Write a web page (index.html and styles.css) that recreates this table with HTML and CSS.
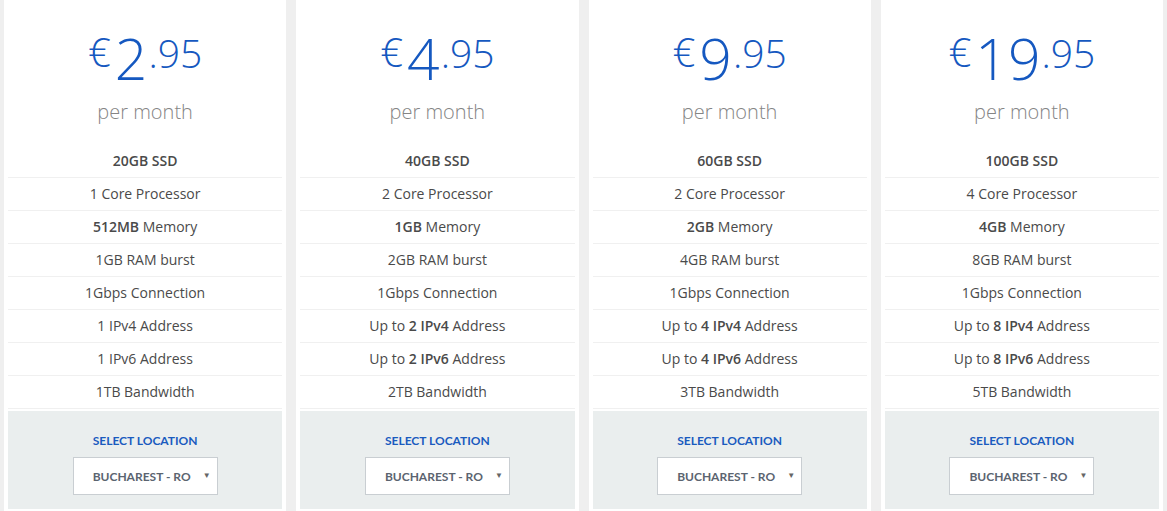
FILE: index.html
```html
<!DOCTYPE html>
<html>
<head>
<meta charset="utf-8">
<link rel="stylesheet" href="styles.css">
</head>
<body>
<div class="plans">
  <div class="card">
    <div class="price-block">
      <div class="price"><span class="cur">€</span><span class="int">2</span><span class="dec">.95</span></div>
      <div class="period">per month</div>
    </div>
    <ul class="features">
      <li><b>20GB SSD</b></li>
      <li>1 Core Processor</li>
      <li><b>512MB</b> Memory</li>
      <li>1GB RAM burst</li>
      <li>1Gbps Connection</li>
      <li>1 IPv4 Address</li>
      <li>1 IPv6 Address</li>
      <li>1TB Bandwidth</li>
    </ul>
    <div class="location">
      <div class="loc-label">SELECT LOCATION</div>
      <div class="select"><span>BUCHAREST - RO</span><span class="arrow">▼</span></div>
    </div>
  </div>
  <div class="card">
    <div class="price-block">
      <div class="price"><span class="cur">€</span><span class="int">4</span><span class="dec">.95</span></div>
      <div class="period">per month</div>
    </div>
    <ul class="features">
      <li><b>40GB SSD</b></li>
      <li>2 Core Processor</li>
      <li><b>1GB</b> Memory</li>
      <li>2GB RAM burst</li>
      <li>1Gbps Connection</li>
      <li>Up to <b>2 IPv4</b> Address</li>
      <li>Up to <b>2 IPv6</b> Address</li>
      <li>2TB Bandwidth</li>
    </ul>
    <div class="location">
      <div class="loc-label">SELECT LOCATION</div>
      <div class="select"><span>BUCHAREST - RO</span><span class="arrow">▼</span></div>
    </div>
  </div>
  <div class="card">
    <div class="price-block">
      <div class="price"><span class="cur">€</span><span class="int">9</span><span class="dec">.95</span></div>
      <div class="period">per month</div>
    </div>
    <ul class="features">
      <li><b>60GB SSD</b></li>
      <li>2 Core Processor</li>
      <li><b>2GB</b> Memory</li>
      <li>4GB RAM burst</li>
      <li>1Gbps Connection</li>
      <li>Up to <b>4 IPv4</b> Address</li>
      <li>Up to <b>4 IPv6</b> Address</li>
      <li>3TB Bandwidth</li>
    </ul>
    <div class="location">
      <div class="loc-label">SELECT LOCATION</div>
      <div class="select"><span>BUCHAREST - RO</span><span class="arrow">▼</span></div>
    </div>
  </div>
  <div class="card">
    <div class="price-block">
      <div class="price"><span class="cur">€</span><span class="int">19</span><span class="dec">.95</span></div>
      <div class="period">per month</div>
    </div>
    <ul class="features">
      <li><b>100GB SSD</b></li>
      <li>4 Core Processor</li>
      <li><b>4GB</b> Memory</li>
      <li>8GB RAM burst</li>
      <li>1Gbps Connection</li>
      <li>Up to <b>8 IPv4</b> Address</li>
      <li>Up to <b>8 IPv6</b> Address</li>
      <li>5TB Bandwidth</li>
    </ul>
    <div class="location">
      <div class="loc-label">SELECT LOCATION</div>
      <div class="select"><span>BUCHAREST - RO</span><span class="arrow">▼</span></div>
    </div>
  </div>
</div>
</body>
</html>
```

FILE: styles.css
```css
html, body {
  margin: 0;
  padding: 0;
  background: #efefef;
}
body {
  font-family: "Open Sans", "Liberation Sans", sans-serif;
  overflow: hidden;
  height: 511px;
}
.plans {
  display: grid;
  grid-template-columns: repeat(4, 1fr);
  column-gap: 10px;
  padding: 0 4px;
}
.card {
  background: #fff;
  padding: 0 4px 3px;
  height: 511px;
  box-sizing: border-box;
}
.price-block {
  height: 145px;
  display: flex;
  flex-direction: column;
  align-items: center;
  padding-top: 30px;
  box-sizing: border-box;
}
.price {
  display: flex;
  align-items: flex-start;
  color: #1558c0;
  font-weight: 300;
  line-height: 1;
}
.cur {
  font-size: 40px;
  margin-top: 2px;
  margin-right: 4px;
}
.int {
  font-size: 57px;
}
.dec {
  font-size: 39px;
  margin-top: 3px;
  margin-left: 1px;
}
.period {
  margin-top: 11px;
  font-size: 20px;
  font-weight: 300;
  color: #858585;
  line-height: 27px;
}
.features {
  list-style: none;
  margin: 0;
  padding: 0;
}
.features li {
  height: 32px;
  line-height: 32px;
  border-bottom: 1px solid #f0f0f0;
  text-align: center;
  font-size: 14px;
  color: #4a4a4a;
}
.features b {
  font-weight: 600;
}
.location {
  margin-top: 2px;
  background: #eaeeee;
  height: 98px;
  display: flex;
  flex-direction: column;
  align-items: center;
  padding-top: 23px;
  box-sizing: border-box;
}
.loc-label {
  font-family: Lato, "Open Sans", sans-serif;
  font-weight: 700;
  font-size: 12px;
  letter-spacing: 0;
  color: #1a5bbf;
  line-height: 13px;
}
.select {
  margin-top: 10px;
  width: 145px;
  height: 38px;
  box-sizing: border-box;
  background: #fff;
  border: 1px solid #c9ced2;
  display: flex;
  align-items: center;
  padding: 0 6px 0 19px;
  justify-content: space-between;
  font-family: Lato, "Open Sans", sans-serif;
  font-weight: 700;
  font-size: 12px;
  color: #5b6470;
}
.arrow {
  font-size: 8px;
  color: #666;
  margin-top: -3px;
}
```
